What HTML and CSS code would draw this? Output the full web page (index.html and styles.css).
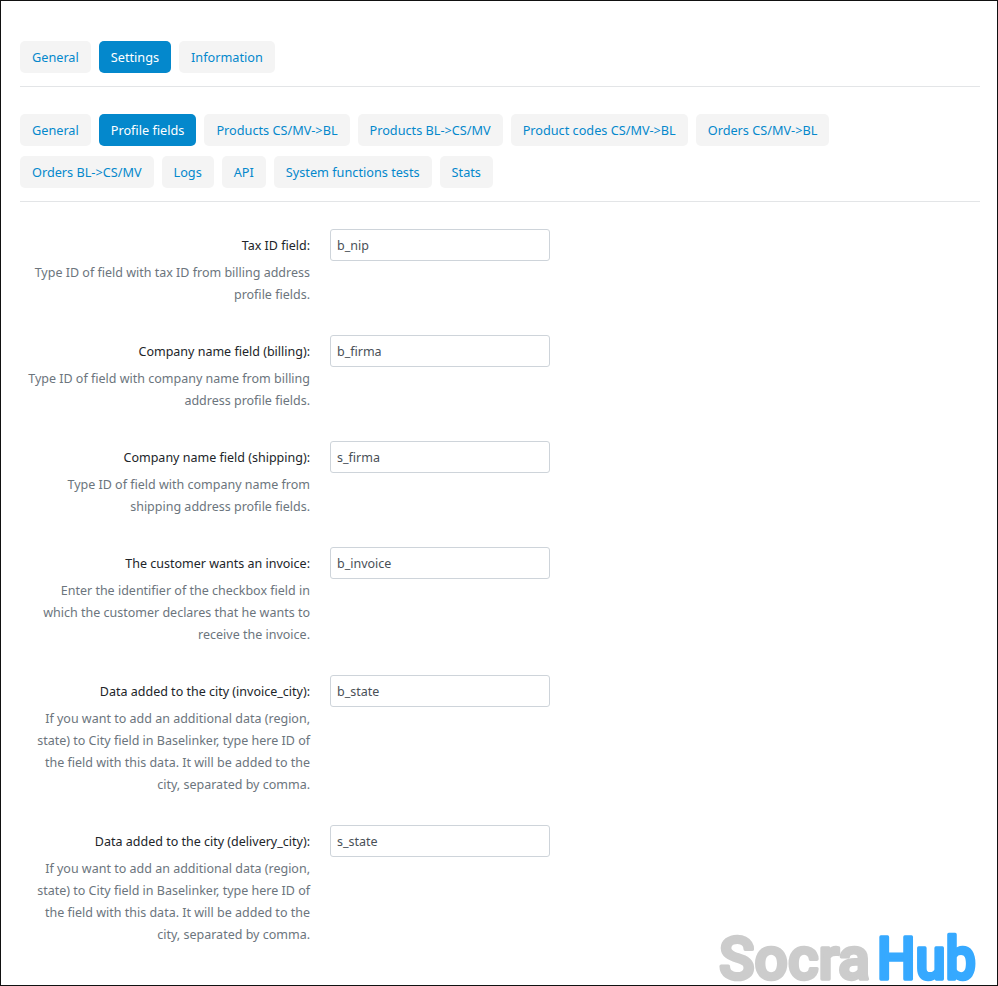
FILE: index.html
```html
<!DOCTYPE html>
<html lang="en">
<head>
<meta charset="utf-8">
<title>Profile fields</title>
<link rel="stylesheet" href="styles.css">
</head>
<body>
<div class="frame">
  <nav class="tabs tabs-top">
    <a class="tab">General</a>
    <a class="tab active">Settings</a>
    <a class="tab">Information</a>
  </nav>
  <nav class="tabs tabs-sub">
    <a class="tab">General</a>
    <a class="tab active">Profile fields</a>
    <a class="tab">Products CS/MV-&gt;BL</a>
    <a class="tab">Products BL-&gt;CS/MV</a>
    <a class="tab">Product codes CS/MV-&gt;BL</a>
    <a class="tab">Orders CS/MV-&gt;BL</a>
    <a class="tab">Orders BL-&gt;CS/MV</a>
    <a class="tab">Logs</a>
    <a class="tab">API</a>
    <a class="tab">System functions tests</a>
    <a class="tab">Stats</a>
  </nav>
  <form class="form">
    <div class="row">
      <div class="info"><label class="label">Tax ID field:</label><p class="help">Type ID of field with tax ID from billing address profile fields.</p></div>
      <input class="field" value="b_nip">
    </div>
    <div class="row">
      <div class="info"><label class="label">Company name field (billing):</label><p class="help">Type ID of field with company name from billing address profile fields.</p></div>
      <input class="field" value="b_firma">
    </div>
    <div class="row">
      <div class="info"><label class="label">Company name field (shipping):</label><p class="help">Type ID of field with company name from shipping address profile fields.</p></div>
      <input class="field" value="s_firma">
    </div>
    <div class="row">
      <div class="info"><label class="label">The customer wants an invoice:</label><p class="help">Enter the identifier of the checkbox field in which the customer declares that he wants to receive the invoice.</p></div>
      <input class="field" value="b_invoice">
    </div>
    <div class="row">
      <div class="info"><label class="label">Data added to the city (invoice_city):</label><p class="help">If you want to add an additional data (region, state) to City field in Baselinker, type here ID of the field with this data. It will be added to the city, separated by comma.</p></div>
      <input class="field" value="b_state">
    </div>
    <div class="row">
      <div class="info"><label class="label">Data added to the city (delivery_city):</label><p class="help">If you want to add an additional data (region, state) to City field in Baselinker, type here ID of the field with this data. It will be added to the city, separated by comma.</p></div>
      <input class="field" value="s_state">
    </div>
  </form>
  <svg class="watermark" width="280" height="59" viewBox="0 0 280 59">
    <text class="wm-grey" x="7" y="53" textLength="151" lengthAdjust="spacingAndGlyphs">Socra</text>
    <text class="wm-blue" x="165" y="53" textLength="99" lengthAdjust="spacingAndGlyphs">Hub</text>
  </svg>
</div>
</body>
</html>
```
FILE: styles.css
```css
* { box-sizing: border-box; }
html, body { margin: 0; padding: 0; background: #fff; }
body { font-family: "Noto Sans", "Open Sans", sans-serif; font-size: 12.5px; color: #212529; }
.frame {
  position: relative;
  width: 998px;
  height: 986px;
  border: 1px solid #111;
  padding: 40px 17px 0 19px;
  overflow: hidden;
}
.tabs {
  display: flex;
  flex-wrap: wrap;
  gap: 10px 8px;
  border-bottom: 1px solid #e3e5e7;
  padding-bottom: 13px;
  margin-bottom: 27px;
}
.tabs-sub { padding-right: 20px; }
.tab {
  display: block;
  height: 32px;
  line-height: 32px;
  padding: 0 12px;
  border-radius: 5px;
  background: #f4f4f4;
  color: #0488cc;
  font-size: 12.7px;
  white-space: nowrap;
}
.tab.active { background: #0488cc; color: #fff; }
.form { display: flex; flex-direction: column; }
.row { display: flex; align-items: flex-start; gap: 20px; }
.row + .row { margin-top: 29px; }
.info { width: 290px; padding-top: 1px; text-align: right; }
.label { display: block; height: 32px; line-height: 32px; color: #212529; }
.help { margin: 0; padding-left: 5px; line-height: 22px; color: #6c757d; }
.field {
  width: 220px;
  height: 32px;
  padding: 0 6px;
  border: 1px solid #ced4da;
  border-radius: 3px;
  background: #fff;
  font: inherit;
  color: #495057;
  outline: none;
}
.watermark {
  position: absolute;
  left: 711px;
  top: 925px;
}
.watermark text {
  font-family: "Roboto", sans-serif;
  font-weight: 500;
  font-size: 60px;
  stroke-width: 3.5px;
  stroke-linejoin: round;
}
.wm-grey { fill: #cccccc; stroke: #cccccc; }
.wm-blue { fill: #36a9ff; stroke: #36a9ff; }
```
